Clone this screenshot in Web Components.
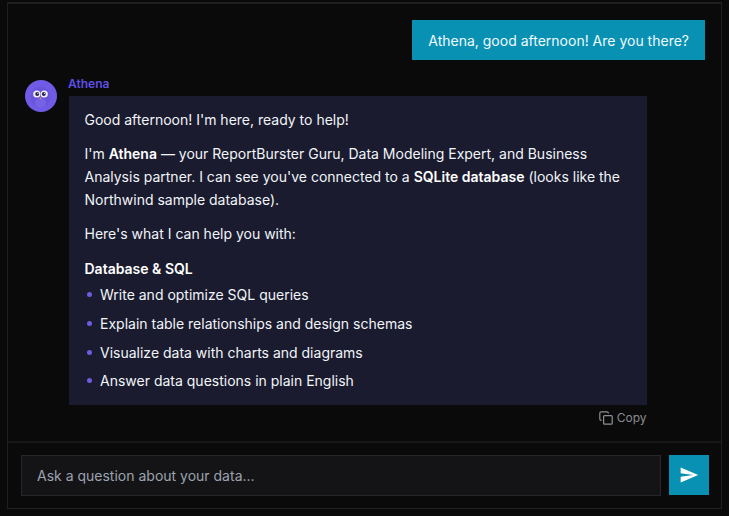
<!DOCTYPE html>
<html>
<head>
<meta charset="utf-8">
<title>Athena</title>
<style>
  html, body { margin: 0; height: 100%; background: #0a0a0a; }
  body { font-family: Inter, "Liberation Sans", sans-serif; font-size: 14px; line-height: 23px; color: #f1f5f9; }
</style>
</head>
<body>
<template id="chat-panel-tpl">
  <style>
    :host { display: flex; flex-direction: column; box-sizing: border-box; height: 516px; padding: 2px 7px 7px 7px; }
    .frame { flex: 1; min-height: 0; display: flex; flex-direction: column; border: 1px solid #1f1f1f; border-top-width: 2px; background: #0a0a0a; }
    .log { flex: 1; min-height: 0; overflow: hidden; display: flex; flex-direction: column; padding: 16px 16px 0 17px; }
    .foot { border-top: 2px solid #171717; }
  </style>
  <div class="frame">
    <div class="log"><slot></slot></div>
    <div class="foot"><slot name="input"></slot></div>
  </div>
</template>

<template id="user-message-tpl">
  <style>
    :host { display: flex; justify-content: flex-end; margin-bottom: 20px; }
    .bubble { background: #0891b2; color: #f0f9ff; padding: 8.5px 16px; line-height: 23px; }
  </style>
  <div class="bubble"><slot></slot></div>
</template>

<template id="assistant-message-tpl">
  <style>
    :host { display: flex; gap: 12px; }
    .avatar { flex: none; width: 32px; height: 32px; }
    .col { width: 577.5px; }
    .name { font-size: 12px; font-weight: 600; line-height: 16px; color: #5f4fe4; margin: -4px 0 4px -1px; }
    .card { background: #1a1b2e; padding: 11.6px 16px 1.1px 15.5px; }
    .tools { display: flex; justify-content: flex-end; margin-top: 4px; }
  </style>
  <div class="avatar"><owl-avatar></owl-avatar></div>
  <div class="col">
    <div class="name"><slot name="name"></slot></div>
    <div class="card"><slot></slot></div>
    <div class="tools"><copy-button></copy-button></div>
  </div>
</template>

<template id="owl-avatar-tpl">
  <style>
    :host { display: block; width: 32px; height: 32px; }
    svg { display: block; }
  </style>
  <svg width="32" height="32" viewBox="0 0 32 32">
    <circle cx="16" cy="16" r="16" fill="#6f5be6"/>
    <ellipse cx="15.5" cy="17" rx="10" ry="10.5" fill="#6450d4" opacity=".55"/>
    <ellipse cx="15.5" cy="23" rx="5.5" ry="4.5" fill="#7a68e8" opacity=".7"/>
    <circle cx="11.8" cy="14" r="3.6" fill="#f1f0fb"/>
    <circle cx="19.2" cy="14" r="3.6" fill="#f1f0fb"/>
    <circle cx="12.2" cy="14" r="2" fill="#2a2250"/>
    <circle cx="18.8" cy="14" r="2" fill="#2a2250"/>
    <circle cx="12.8" cy="13.3" r=".6" fill="#fff"/>
    <circle cx="19.4" cy="13.3" r=".6" fill="#fff"/>
    <path d="M14.4 17.6h2.2l-1.1 1.8z" fill="#f59e0b"/>
  </svg>
</template>

<template id="copy-button-tpl">
  <style>
    :host { display: inline-flex; align-items: center; gap: 3.5px; font-size: 12px; line-height: 18px; color: #8b8b92; }
    svg { display: block; }
  </style>
  <svg width="14" height="14" viewBox="0 0 14 14" fill="none" stroke="#8f8f95" stroke-width="1.2">
    <rect x="4.6" y="4.6" width="8.6" height="8.6" rx="1"/>
    <path d="M2.6 9.4h-.4a1.4 1.4 0 0 1-1.4-1.4V2.2A1.4 1.4 0 0 1 2.2.8H8a1.4 1.4 0 0 1 1.4 1.4v.4"/>
  </svg>
  <span>Copy</span>
</template>

<template id="chat-input-tpl">
  <style>
    :host { display: flex; gap: 8px; padding: 12px 12px 12px 13px; }
    .field { flex: 1; box-sizing: border-box; height: 41px; display: flex; align-items: center; padding: 0 15px; background: #141416; border: 1px solid #27272a; color: #9ca3af; }
    .send { flex: none; width: 40px; height: 40px; display: flex; align-items: center; justify-content: center; background: #0891b2; }
    svg { display: block; }
  </style>
  <div class="field"><slot></slot></div>
  <div class="send">
    <svg width="20" height="20" viewBox="0 0 24 24"><path d="M2.01 21 23 12 2.01 3 2 10l15 2-15 2z" fill="#fff"/></svg>
  </div>
</template>

<template id="message-text-tpl">
  <style>
    :host { display: block; margin: 0 0 11.4px; }
    ::slotted(b) { font-weight: 600; color: #fff; }
  </style>
  <slot></slot>
</template>

<template id="bullet-list-tpl">
  <style>
    :host { display: flex; flex-direction: column; gap: 5.7px; padding-bottom: 11.4px; }
  </style>
  <slot></slot>
</template>

<template id="bullet-item-tpl">
  <style>
    :host { display: flex; align-items: center; gap: 8.5px; padding-left: 2px; }
    .dot { flex: none; width: 5px; height: 5px; border-radius: 50%; background: #6d5be0; }
  </style>
  <span class="dot"></span><span><slot></slot></span>
</template>

<chat-panel>
  <user-message>Athena, good afternoon! Are you there?</user-message>
  <assistant-message>
    <span slot="name">Athena</span>
    <message-text>Good afternoon! I'm here, ready to help!</message-text>
    <message-text>I'm <b>Athena</b> — your ReportBurster Guru, Data Modeling Expert, and Business Analysis partner. I can see you've connected to a <b>SQLite database</b> (looks like the Northwind sample database).</message-text>
    <message-text>Here's what I can help you with:</message-text>
    <message-text style="margin-bottom:3.6px"><b>Database &amp; SQL</b></message-text>
    <bullet-list>
      <bullet-item>Write and optimize SQL queries</bullet-item>
      <bullet-item>Explain table relationships and design schemas</bullet-item>
      <bullet-item>Visualize data with charts and diagrams</bullet-item>
      <bullet-item>Answer data questions in plain English</bullet-item>
    </bullet-list>
  </assistant-message>
  <chat-input slot="input">Ask a question about your data...</chat-input>
</chat-panel>

<script>
  // every element just stamps its own template into an open shadow root
  function define(name) {
    customElements.define(name, class extends HTMLElement {
      constructor() {
        super();
        this.attachShadow({ mode: "open" });
        const tpl = document.getElementById(name + "-tpl");
        this.shadowRoot.appendChild(tpl.content.cloneNode(true));
      }
    });
  }

  ["owl-avatar", "copy-button", "chat-panel", "user-message", "assistant-message",
   "chat-input", "message-text", "bullet-list", "bullet-item"].forEach(define);
</script>
</body>
</html>
